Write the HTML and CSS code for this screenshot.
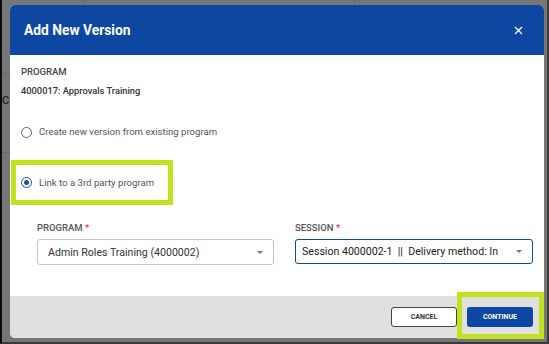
FILE: index.html
```html
<!DOCTYPE html>
<html>
<head>
    <title>Add New Version</title>
    <link rel="stylesheet" href="styles.css">
</head>
<body>
    <div class="screen">
        <!-- page behind the overlay -->
        <div class="backdrop">
            <span class="bg-line bg-line-v1"></span>
            <span class="bg-line bg-line-v2"></span>
            <span class="bg-line bg-line-h1"></span>
            <span class="bg-line bg-line-h2"></span>
            <span class="bg-text">CE</span>
        </div>

        <div class="modal">
            <div class="modal-header">
                <h1>Add New Version</h1>
                <svg class="close" width="9" height="9" viewBox="0 0 9 9">
                    <path d="M1 1L8 8M8 1L1 8" stroke="#fff" stroke-width="1.3"/>
                </svg>
            </div>

            <div class="modal-body">
                <div class="field-label">PROGRAM</div>
                <div class="field-value">4000017: Approvals Training</div>

                <label class="radio-row">
                    <span class="radio"></span>
                    Create new version from existing program
                </label>

                <label class="radio-row highlight">
                    <span class="radio checked"></span>
                    Link to a 3rd party program
                </label>

                <div class="form-grid">
                    <div class="form-field">
                        <div class="form-label">PROGRAM <span class="req">*</span></div>
                        <div class="select">
                            <span class="select-text">Admin Roles Training (4000002)</span>
                            <span class="caret"></span>
                        </div>
                    </div>
                    <div class="form-field">
                        <div class="form-label">SESSION <span class="req">*</span></div>
                        <div class="select focused">
                            <span class="select-text">Session 4000002-1&nbsp;&nbsp;||&nbsp;&nbsp;Delivery method: In</span>
                            <span class="caret"></span>
                        </div>
                    </div>
                </div>
            </div>

            <div class="modal-footer">
                <button class="btn btn-cancel">CANCEL</button>
                <button class="btn btn-continue">CONTINUE</button>
                <span class="highlight-box"></span>
            </div>
        </div>
    </div>
</body>
</html>
```

FILE: styles.css
```css
* {
    box-sizing: border-box;
}
html, body {
    margin: 0;
    padding: 0;
}
body {
    font-family: Roboto, "Liberation Sans", sans-serif;
    background: #2b2b2b;
}
.screen {
    position: relative;
    width: 549px;
    height: 344px;
    background: #767676;
    border-left: 2px solid #0c0c0c;
    border-right: 2px solid #3a3a3a;
    border-bottom: 2px solid #3a3a3a;
    padding: 5px 3px 0 8px;
    overflow: hidden;
}
.backdrop {
    position: absolute;
    inset: 0;
}
.bg-line {
    position: absolute;
    background: #6a6a6a;
}
.bg-line-v1 { left: 81px; top: 0; width: 1px; height: 5px; }
.bg-line-v2 { left: 352px; top: 0; width: 1px; height: 5px; }
.bg-line-h1 { left: 0; top: 73px; width: 8px; height: 1px; }
.bg-line-h2 { left: 0; top: 152px; width: 8px; height: 1px; }
.bg-text {
    position: absolute;
    left: 0;
    top: 94px;
    font-size: 11px;
    font-weight: 500;
    color: #1e2630;
}

.modal {
    position: relative;
    width: 534px;
    height: 333px;
    background: #fff;
    border-radius: 5px;
    display: flex;
    flex-direction: column;
}
.modal-header {
    height: 50px;
    flex: none;
    background: #0e47a1;
    border-radius: 5px 5px 0 0;
    display: flex;
    align-items: center;
    justify-content: space-between;
    padding: 0 21px 0 14px;
}
.modal-header h1 {
    margin: 0;
    color: #fff;
    font-size: 13.8px;
    font-weight: 700;
}
.close {
    display: block;
}

.modal-body {
    flex: 1;
    padding: 11px 0 0 11px;
}
.field-label {
    font-size: 9.5px;
    font-weight: 500;
    color: #444;
    line-height: 12px;
}
.field-value {
    margin-top: 7px;
    font-size: 9.3px;
    font-weight: 500;
    color: #333;
    line-height: 12px;
}
.radio-row {
    display: flex;
    align-items: center;
    gap: 7px;
    margin-top: 29px;
    font-size: 9.6px;
    color: #555;
    line-height: 12px;
}
.radio {
    width: 11px;
    height: 11px;
    border: 1.3px solid #666;
    border-radius: 50%;
    flex: none;
    display: flex;
    align-items: center;
    justify-content: center;
}
.radio.checked {
    border-color: #1f4fa8;
}
.radio.checked::after {
    content: "";
    width: 5px;
    height: 5px;
    border-radius: 50%;
    background: #1f4fa8;
}
.radio-row.highlight {
    width: 162px;
    height: 45px;
    margin: 22px 0 0 -10px;
    padding-left: 5px;
    border: 5px solid #c0e31d;
}

.form-grid {
    display: grid;
    grid-template-columns: 237px 238px;
    gap: 21px;
    margin: 17px 0 0 16px;
}
.form-field {
    min-width: 0;
}
.form-label {
    font-size: 9.5px;
    font-weight: 500;
    color: #555;
    line-height: 12px;
}
.req {
    color: #e53935;
}
.select {
    width: 100%;
    margin-top: 5px;
    height: 26px;
    border: 1px solid #c4c4c4;
    border-radius: 3px;
    display: flex;
    align-items: center;
    padding: 0 10px;
}
.select.focused {
    height: 25px;
    border-color: #0e47a1;
    padding-left: 6px;
}
.select-text {
    flex: 1;
    min-width: 0;
    font-size: 10.6px;
    color: #333;
    white-space: nowrap;
    overflow: hidden;
}
.select.focused .select-text {
    color: #222;
}
.caret {
    flex: none;
    width: 0;
    height: 0;
    border-left: 3.5px solid transparent;
    border-right: 3.5px solid transparent;
    border-top: 3.5px solid #777;
    margin-left: 8px;
}

.modal-footer {
    position: relative;
    height: 42px;
    flex: none;
    background: #e0e0e0;
    border-radius: 0 0 5px 5px;
    display: flex;
    align-items: center;
    justify-content: flex-end;
    gap: 10px;
    padding-right: 11px;
}
.btn {
    width: 66px;
    height: 20px;
    border-radius: 3px;
    font-family: Roboto, "Liberation Sans", sans-serif;
    font-size: 7px;
    font-weight: 700;
    padding: 0;
    cursor: pointer;
}
.btn-cancel {
    background: #fff;
    border: 1px solid #444;
    color: #333;
}
.btn-continue {
    background: #0e47a1;
    border: none;
    color: #fff;
}
.highlight-box {
    position: absolute;
    left: 447px;
    top: -4px;
    width: 87px;
    height: 47px;
    border: 5px solid #c0e31d;
}
```
